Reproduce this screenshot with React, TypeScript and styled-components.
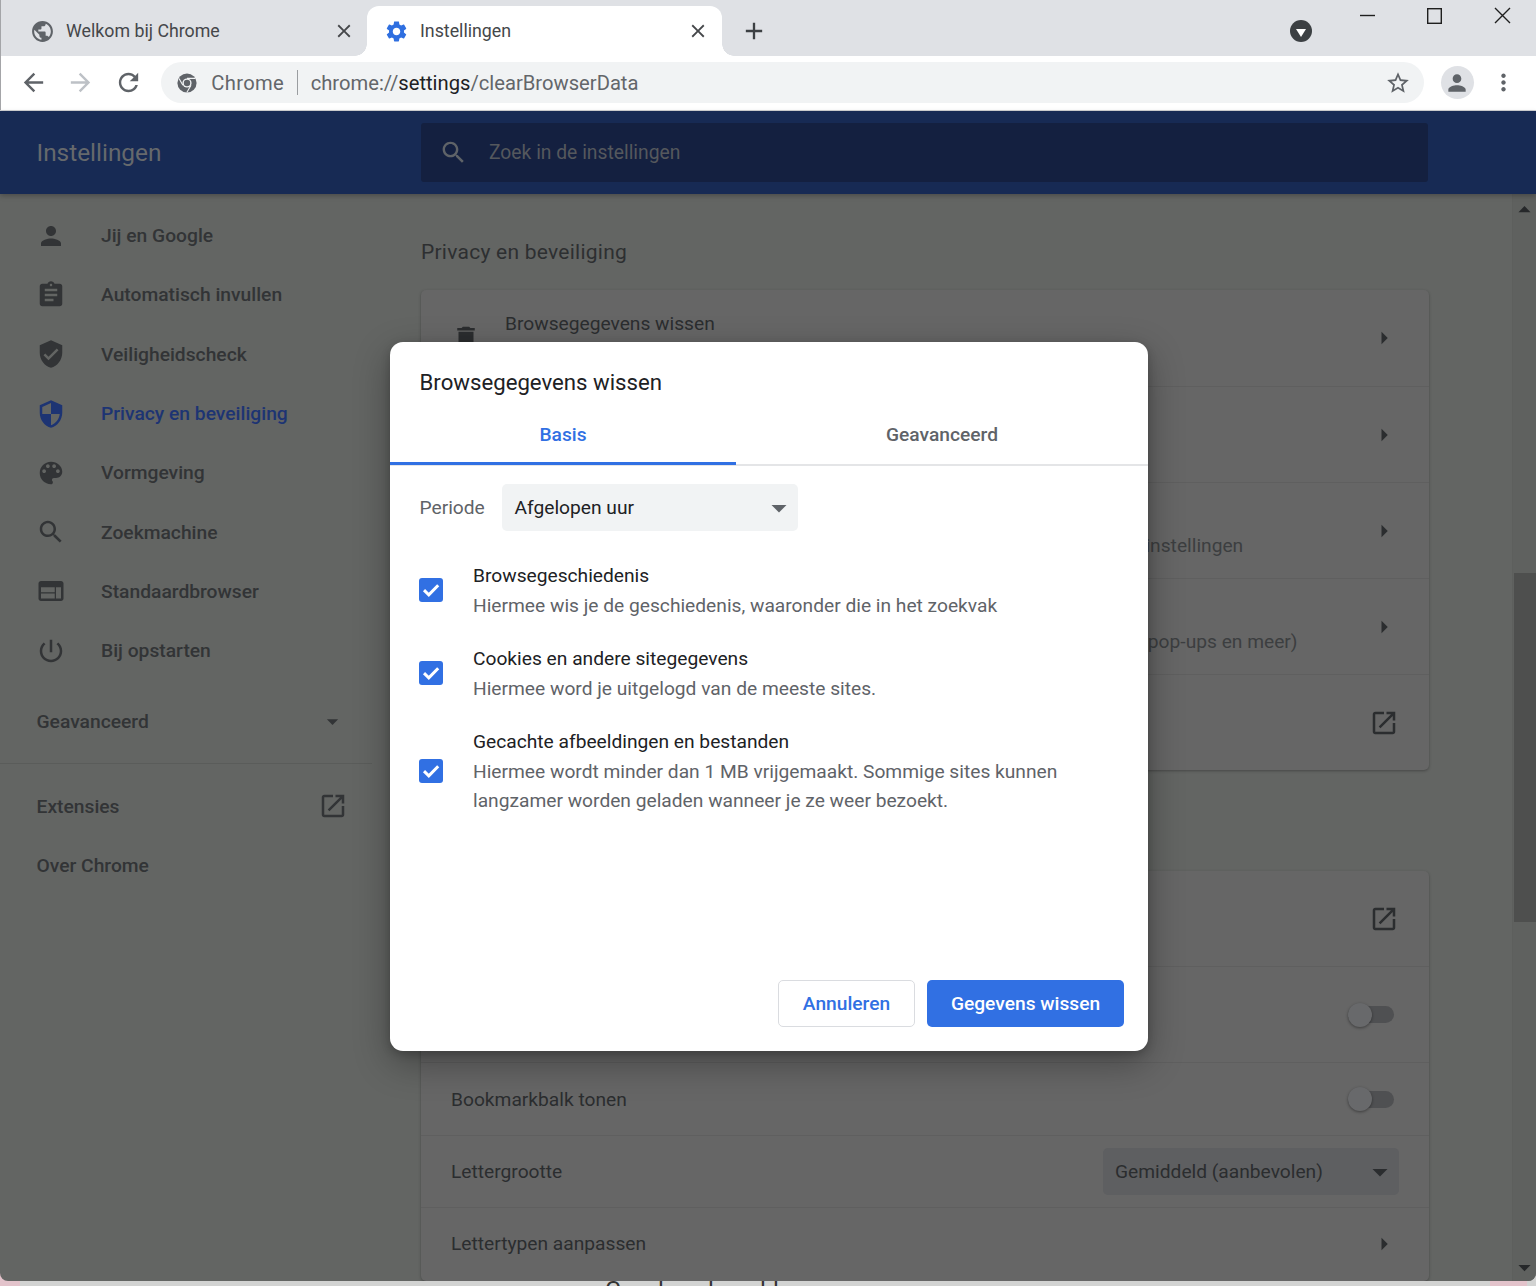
import React from "react";
import styled, { createGlobalStyle } from "styled-components";

const Global = createGlobalStyle`
  html, body { margin: 0; padding: 0; background: #d2d3d2; }
  * { box-sizing: border-box; }
`;

const P = {
  person: "M12 12c2.21 0 4-1.79 4-4s-1.79-4-4-4-4 1.79-4 4 1.79 4 4 4zm0 2c-2.67 0-8 1.34-8 4v2h16v-2c0-2.66-5.33-4-8-4z",
  assignment: "M19 3h-4.18C14.4 1.84 13.3 1 12 1c-1.3 0-2.4.84-2.82 2H5c-1.1 0-2 .9-2 2v14c0 1.1.9 2 2 2h14c1.1 0 2-.9 2-2V5c0-1.1-.9-2-2-2zm-7 0c.55 0 1 .45 1 1s-.45 1-1 1-1-.45-1-1 .45-1 1-1zm2 14H7v-2h7v2zm3-4H7v-2h10v2zm0-4H7V7h10v2z",
  verified: "M12 1L3 5v6c0 5.55 3.84 10.74 9 12 5.16-1.26 9-6.45 9-12V5l-9-4zm-2 16l-4-4 1.41-1.41L10 14.17l6.59-6.59L18 9l-8 8z",
  security: "M12 1L3 5v6c0 5.55 3.84 10.74 9 12 5.16-1.26 9-6.45 9-12V5l-9-4zm0 10.99h7c-.53 4.12-3.28 7.79-7 8.94V12H5V6.3l7-3.11v8.8z",
  palette: "M12 3c-4.97 0-9 4.03-9 9s4.03 9 9 9c.83 0 1.5-.67 1.5-1.5 0-.39-.15-.74-.39-1.01-.23-.26-.38-.61-.38-.99 0-.83.67-1.5 1.5-1.5H16c2.76 0 5-2.24 5-5 0-4.42-4.03-8-9-8zm-5.5 9c-.83 0-1.5-.67-1.5-1.5S5.67 9 6.5 9 8 9.67 8 10.5 7.33 12 6.5 12zm3-4C8.67 8 8 7.33 8 6.5S8.67 5 9.5 5s1.5.67 1.5 1.5S10.33 8 9.5 8zm5 0c-.83 0-1.5-.67-1.5-1.5S13.67 5 14.5 5s1.5.67 1.5 1.5S15.33 8 14.5 8zm3 4c-.83 0-1.5-.67-1.5-1.5S16.67 9 17.5 9s1.5.67 1.5 1.5-.67 1.5-1.5 1.5z",
  search: "M15.5 14h-.79l-.28-.27C15.41 12.59 16 11.11 16 9.5 16 5.91 13.09 3 9.5 3S3 5.91 3 9.5 5.91 16 9.5 16c1.61 0 3.09-.59 4.23-1.57l.27.28v.79l5 4.99L20.49 19l-4.99-5zm-6 0C7.01 14 5 11.99 5 9.5S7.01 5 9.5 5 14 7.01 14 9.5 11.99 14 9.5 14z",
  web: "M20 4H4c-1.1 0-1.99.9-1.99 2L2 18c0 1.1.9 2 2 2h16c1.1 0 2-.9 2-2V6c0-1.1-.9-2-2-2zm-5 14H4v-4h11v4zm0-5H4V9h11v4zm5 5h-4V9h4v9z",
  power: "M13 3h-2v10h2V3zm4.83 2.17l-1.42 1.42C17.99 7.86 19 9.81 19 12c0 3.87-3.13 7-7 7s-7-3.13-7-7c0-2.19 1.01-4.14 2.58-5.42L6.17 5.17C4.23 6.82 3 9.26 3 12c0 4.97 4.03 9 9 9s9-4.03 9-9c0-2.74-1.23-5.18-3.17-6.83z",
  open: "M19 19H5V5h7V3H5c-1.11 0-2 .9-2 2v14c0 1.1.89 2 2 2h14c1.1 0 2-.9 2-2v-7h-2v7zM14 3v2h3.59l-9.83 9.83 1.41 1.41L19 6.41V10h2V3h-7z",
  down: "M7 10l5 5 5-5z",
  right: "M10 17l5-5-5-5v10z",
  trash: "M6 19c0 1.1.9 2 2 2h8c1.1 0 2-.9 2-2V7H6v12zM19 4h-3.5l-1-1h-5l-1 1H5v2h14V4z",
  gear: "M19.14 12.94c.04-.3.06-.61.06-.94 0-.32-.02-.64-.07-.94l2.03-1.58c.18-.14.23-.41.12-.61l-1.92-3.32c-.12-.22-.37-.29-.59-.22l-2.39.96c-.5-.38-1.03-.7-1.62-.94l-.36-2.54c-.04-.24-.24-.41-.48-.41h-3.84c-.24 0-.43.17-.47.41l-.36 2.54c-.59.24-1.13.57-1.62.94l-2.39-.96c-.22-.08-.47 0-.59.22L2.74 8.87c-.12.21-.08.47.12.61l2.03 1.58c-.05.3-.09.63-.09.94s.02.64.07.94l-2.03 1.58c-.18.14-.23.41-.12.61l1.92 3.32c.12.22.37.29.59.22l2.39-.96c.5.38 1.03.7 1.62.94l.36 2.54c.05.24.24.41.48.41h3.84c.24 0 .44-.17.47-.41l.36-2.54c.59-.24 1.13-.56 1.62-.94l2.39.96c.22.08.47 0 .59-.22l1.92-3.32c.12-.22.07-.47-.12-.61l-2.01-1.58zM12 15.6c-1.98 0-3.6-1.62-3.6-3.6s1.62-3.6 3.6-3.6 3.6 1.62 3.6 3.6-1.62 3.6-3.6 3.6z",
  globe: "M12 2C6.48 2 2 6.48 2 12s4.48 10 10 10 10-4.48 10-10S17.52 2 12 2zm-1 17.93c-3.95-.49-7-3.85-7-7.93 0-.62.08-1.21.21-1.79L9 15v1c0 1.1.9 2 2 2v1.93zm6.9-2.54c-.26-.81-1-1.39-1.9-1.39h-1v-3c0-.55-.45-1-1-1H8v-2h2c.55 0 1-.45 1-1V7h2c1.1 0 2-.9 2-2v-.41c2.93 1.19 5 4.06 5 7.41 0 2.08-.8 3.97-2.1 5.39z",
  back: "M20 11H7.83l5.59-5.59L12 4l-8 8 8 8 1.41-1.41L7.83 13H20v-2z",
  forward: "M12 4l-1.41 1.41L16.17 11H4v2h12.17l-5.58 5.59L12 20l8-8z",
  reload: "M17.65 6.35C16.2 4.9 14.21 4 12 4c-4.42 0-7.99 3.58-7.99 8s3.57 8 7.99 8c3.73 0 6.84-2.55 7.73-6h-2.08c-.82 2.33-3.04 4-5.65 4-3.31 0-6-2.69-6-6s2.69-6 6-6c1.66 0 3.14.69 4.22 1.78L13 11h7V4l-2.35 2.35z",
  star: "M22 9.24l-7.19-.62L12 2 9.19 8.63 2 9.24l5.46 4.73L5.82 21 12 17.27 18.18 21l-1.63-7.03L22 9.24zM12 15.4l-3.76 2.27 1-4.28-3.32-2.88 4.38-.38L12 6.1l1.71 4.04 4.38.38-3.32 2.88 1 4.28L12 15.4z",
  close: "M19 6.41L17.59 5 12 10.59 6.41 5 5 6.41 10.59 12 5 17.59 6.41 19 12 13.41 17.59 19 19 17.59 13.41 12z",
  plus: "M19 13h-6v6h-2v-6H5v-2h6V5h2v6h6v2z",
  dots: "M12 8c1.1 0 2-.9 2-2s-.9-2-2-2-2 .9-2 2 .9 2 2 2zm0 2c-1.1 0-2 .9-2 2s.9 2 2 2 2-.9 2-2-.9-2-2-2zm0 6c-1.1 0-2 .9-2 2s.9 2 2 2 2-.9 2-2-.9-2-2-2z",
};

const Glyph = ({ d, size = 30, color = "currentColor" }: { d: string; size?: number; color?: string }) => (
  <svg width={size} height={size} viewBox="0 0 24 24" fill={color} style={{ flex: "none", display: "block" }}>
    <path d={d} />
  </svg>
);

const Frame = styled.div`
  position: relative;
  width: 1536px;
  height: 1286px;
  overflow: hidden;
  display: flex;
  flex-direction: column;
  font-family: Roboto, "Liberation Sans", sans-serif;
  background: linear-gradient(to right, #e3c3cb 20px, #d2d3d2 20px);
`;

/* ---- tab strip ---- */
const TabStrip = styled.div`
  height: 56px;
  flex: none;
  background: #dfe1e5;
  display: flex;
  align-items: flex-end;
  position: relative;
  box-shadow: inset 1px 0 #a4a5a8;
`;
const Tab = styled.div<{ $active?: boolean; $w: number }>`
  position: relative;
  width: ${(p) => p.$w}px;
  height: 50px;
  display: flex;
  align-items: center;
  padding: 0 ${(p) => (p.$active ? 13 : 12)}px 0 ${(p) => (p.$active ? 17 : 30)}px;
  border-radius: 12px 12px 0 0;
  background: ${(p) => (p.$active ? "#fff" : "transparent")};
  ${(p) =>
    p.$active &&
    `
    &::before, &::after {
      content: "";
      position: absolute;
      bottom: 0;
      width: 12px;
      height: 12px;
    }
    &::before { left: -12px; background: radial-gradient(circle at 0 0, transparent 11.5px, #fff 12px); }
    &::after { right: -12px; background: radial-gradient(circle at 100% 0, transparent 11.5px, #fff 12px); }
  `}
`;
const TabTitle = styled.span`
  flex: 1;
  margin: 0 0 2px 11px;
  font-size: 17.8px;
  color: #45474a;
  white-space: nowrap;
`;
const PlusButton = styled.div`
  width: 36px;
  height: 50px;
  margin-left: 14px;
  display: flex;
  align-items: center;
  justify-content: center;
`;
const StripSpacer = styled.div`
  flex: 1;
`;
const DropCircle = styled.div`
  width: 22px;
  height: 22px;
  margin: 0 224px 14px 0;
  border-radius: 50%;
  background: #3c4043;
  display: flex;
  align-items: center;
  justify-content: center;
  align-self: flex-end;
  &::after {
    content: "";
    margin-top: 3px;
    border-left: 5.5px solid transparent;
    border-right: 5.5px solid transparent;
    border-top: 8px solid #fff;
  }
`;
const WindowControls = styled.svg`
  position: absolute;
  top: 0;
  right: 0;
  width: 190px;
  height: 32px;
`;

/* ---- toolbar ---- */
const Toolbar = styled.div`
  height: 55px;
  flex: none;
  background: #fff;
  border-bottom: 1px solid #d3d4d6;
  display: flex;
  align-items: flex-start;
  padding: 6px 0 0 9.5px;
  box-shadow: inset 1px 0 #a4a5a8;
`;
const NavButton = styled.div<{ $w?: number }>`
  width: ${(p) => p.$w ?? 47.5}px;
  height: 41px;
  flex: none;
  display: flex;
  align-items: center;
  justify-content: center;
`;
const Omnibox = styled.div`
  width: 1263px;
  height: 41px;
  margin-left: 9.25px;
  border-radius: 21px;
  background: #f1f3f4;
  display: flex;
  align-items: center;
  padding: 0 13px 0 16px;
  font-size: 20.2px;
  color: #63666a;
  white-space: nowrap;
`;
const ChipLabel = styled.span`
  margin-left: 14px;
  letter-spacing: 0.35px;
`;
const OmniDivider = styled.span`
  width: 1px;
  height: 25px;
  margin: 0 13px 0 12.5px;
  background: #9a9da0;
`;
const UrlStrong = styled.span`
  color: #202124;
`;
const Grow = styled.div`
  flex: 1;
`;
const Avatar = styled.div`
  width: 33px;
  height: 33px;
  border-radius: 50%;
  background: #dfe1e5;
  display: flex;
  align-items: center;
  justify-content: center;
`;

/* ---- settings header ---- */
const Header = styled.header`
  height: 83px;
  flex: none;
  background: #172a54;
  display: flex;
  align-items: center;
  padding-left: 36.5px;
  box-shadow: 0 2px 5px rgba(0, 0, 0, 0.25);
  position: relative;
  z-index: 1;
`;
const HeaderTitle = styled.h1`
  width: 384.5px;
  margin: 0;
  font-size: 24.4px;
  font-weight: 400;
  color: #66696c;
`;
const SearchField = styled.div`
  width: 1007px;
  height: 59px;
  border-radius: 3px;
  background: #142040;
  display: flex;
  align-items: center;
  padding-left: 18px;
  color: #5f6368;
  font-size: 19.3px;
`;
const SearchText = styled.span`
  margin-left: 21px;
  color: #55585d;
`;

/* ---- body ---- */
const Body = styled.div`
  height: 1087px;
  flex: none;
  background: #636563;
  display: flex;
  border-radius: 0 0 8px 8px;
  overflow: hidden;
`;
const Sidebar = styled.nav`
  width: 372px;
  flex: none;
  padding-top: 12px;
  font-size: 19.25px;
  font-weight: 500;
  color: #323436;
`;
const NavItem = styled.div<{ $active?: boolean }>`
  height: 59.3px;
  display: flex;
  align-items: center;
  padding-left: 36px;
  gap: 35px;
  color: ${(p) => (p.$active ? "#1d3473" : "#323436")};
`;
const PlainItem = styled.div<{ $gap?: number }>`
  height: 59.3px;
  margin-top: ${(p) => p.$gap ?? 0}px;
  display: flex;
  align-items: center;
  justify-content: space-between;
  padding: 0 24.5px 0 36.5px;
`;
const ChevronSlot = styled.div`
  width: 30px;
  display: flex;
  justify-content: center;
`;
const NavDivider = styled.div`
  height: 1px;
  margin: 12px 0 13px;
  background: #5a5c5a;
`;
const Main = styled.main`
  flex: 1;
  padding: 0 0 0 49px;
  min-width: 0;
`;
const SectionTitle = styled.h2`
  margin: 0;
  height: 96px;
  padding-top: 44px;
  font-size: 21px;
  line-height: 28px;
  font-weight: 400;
  letter-spacing: 0.25px;
  color: #2d2f31;
`;
const Card = styled.section<{ $gap?: number; $pad?: number }>`
  width: 1008px;
  margin-top: ${(p) => p.$gap ?? 0}px;
  padding-bottom: ${(p) => p.$pad ?? 0}px;
  background: #666666;
  border-radius: 5px;
  box-shadow: 0 1px 3px rgba(0, 0, 0, 0.3);
`;
const Row = styled.div<{ $h: number }>`
  height: ${(p) => p.$h}px;
  display: flex;
  align-items: center;
  padding: 0 30px;
  color: #2b2d2f;
  font-size: 19.2px;
  white-space: nowrap;
  & + & {
    border-top: 1px solid #5f5f5f;
  }
`;
const RowIcon = styled.div`
  width: 30px;
  margin-right: 24px;
  color: #2b2d2f;
`;
const RowText = styled.div`
  flex: 1;
  min-width: 0;
  line-height: 29px;
`;
const RowSub = styled.div`
  color: #3c3e40;
`;
const Toggle = styled.div`
  position: relative;
  width: 46px;
  height: 17px;
  margin-right: 5px;
  border-radius: 9px;
  background: #4f5052;
  &::before {
    content: "";
    position: absolute;
    left: 0;
    top: -3.5px;
    width: 24px;
    height: 24px;
    border-radius: 50%;
    background: #68696b;
    box-shadow: 0 1px 3px rgba(0, 0, 0, 0.4);
  }
`;
const MiniSelect = styled.div`
  width: 296px;
  height: 47px;
  border-radius: 5px;
  background: #5e5f61;
  display: flex;
  align-items: center;
  justify-content: space-between;
  padding: 0 1px 0 12px;
  color: #2b2d2f;
`;
const ScrollTrack = styled.div`
  width: 24px;
  flex: none;
  background: #5f615f;
  border-left: 1px solid #5d5f5d;
  display: flex;
  flex-direction: column;
  align-items: center;
  color: #26282a;
`;
const ScrollCap = styled.div`
  height: 28px;
  width: 100%;
  display: flex;
  align-items: center;
  justify-content: center;
`;
const ScrollThumb = styled.div`
  width: 22px;
  height: 349px;
  margin-top: 351px;
  background: #4e4f4e;
`;

/* ---- bottom sliver ---- */
const Sliver = styled.div`
  height: 5px;
  flex: none;
  display: flex;
  overflow: hidden;
  background: #d2d3d2;
  font-size: 24px;
  line-height: 24px;
  color: #333;
`;
const SliverPink = styled.div<{ $w: number }>`
  width: ${(p) => p.$w}px;
  flex: none;
  background: #e3c3cb;
`;
const SliverText = styled.span<{ $w: number }>`
  width: ${(p) => p.$w}px;
  flex: none;
  margin-top: -3px;
`;

/* ---- dialog ---- */
const Dialog = styled.div`
  position: absolute;
  left: 390px;
  top: 342px;
  width: 758px;
  height: 709px;
  z-index: 5;
  background: #fff;
  border-radius: 13px;
  box-shadow: 0 12px 36px rgba(0, 0, 0, 0.32), 0 3px 10px rgba(0, 0, 0, 0.2);
  display: flex;
  flex-direction: column;
  color: #202124;
  font-size: 19.2px;
`;
const DialogTitle = styled.h3`
  margin: 0;
  height: 73px;
  padding: 26px 29.5px 0;
  font-size: 22.2px;
  line-height: 28px;
  font-weight: 400;
`;
const TabBar = styled.div`
  height: 51px;
  display: flex;
  border-bottom: 2px solid #e4e5e7;
  flex: none;
`;
const DialogTab = styled.div<{ $active?: boolean; $w: number }>`
  width: ${(p) => p.$w}px;
  height: 50px;
  display: flex;
  align-items: flex-start;
  justify-content: center;
  padding-top: 8px;
  font-weight: 500;
  color: ${(p) => (p.$active ? "#3170e3" : "#5f6368")};
  border-bottom: ${(p) => (p.$active ? "3px solid #3170e3" : "none")};
`;
const PeriodRow = styled.div`
  display: flex;
  align-items: center;
  padding: 18px 0 0 29.5px;
  flex: none;
`;
const PeriodLabel = styled.span`
  width: 82.5px;
  color: #5f6368;
`;
const PeriodSelect = styled.div`
  width: 296px;
  height: 47px;
  border-radius: 5px;
  background: #f1f3f4;
  display: flex;
  align-items: center;
  justify-content: space-between;
  padding: 0 1px 0 12.5px;
`;
const Options = styled.div`
  padding: 30px 60px 0 29px;
  flex: 1;
`;
const Option = styled.div<{ $h: number }>`
  height: ${(p) => p.$h}px;
  display: flex;
  align-items: flex-start;
  gap: 30px;
  line-height: 29.6px;
`;
const Check = styled.div<{ $top: number }>`
  width: 24px;
  height: 24px;
  flex: none;
  margin-top: ${(p) => p.$top}px;
  border-radius: 3px;
  background: #3170e3;
  display: flex;
  align-items: center;
  justify-content: center;
`;
const OptionText = styled.div`
  flex: 1;
`;
const OptionSub = styled.div`
  color: #5f6368;
`;
const Footer = styled.div`
  flex: none;
  display: flex;
  justify-content: flex-end;
  gap: 12px;
  padding: 0 24px 24px 0;
`;
const Button = styled.button<{ $primary?: boolean }>`
  height: 47px;
  border-radius: 5px;
  font: 500 19.2px Roboto, "Liberation Sans", sans-serif;
  cursor: pointer;
  padding: 0;
  width: ${(p) => (p.$primary ? "197px" : "137px")};
  background: ${(p) => (p.$primary ? "#3170e3" : "#fff")};
  color: ${(p) => (p.$primary ? "#fff" : "#3170e3")};
  border: ${(p) => (p.$primary ? "none" : "1.5px solid #dadce0")};
`;

const ChromeMark = () => (
  <svg width="20" height="20" viewBox="0 0 20 20" style={{ flex: "none" }}>
    <circle cx="10" cy="10" r="9.6" fill="#5f6368" />
    <circle cx="10" cy="10" r="4.6" fill="#f1f3f4" />
    <circle cx="10" cy="10" r="3.2" fill="#5f6368" />
    <path d="M10 5.4h8.4M5.9 12.2 2 5.5M14 12.3l-4.2 7.2" stroke="#f1f3f4" strokeWidth="1.1" />
  </svg>
);

const CheckMark = () => (
  <svg width="24" height="24" viewBox="0 0 24 24" fill="none" stroke="#fff" strokeWidth="3">
    <path d="M5 12.2l4.8 4.6L19.2 7.2" />
  </svg>
);

const nav: [string, string, boolean?][] = [
  [P.person, "Jij en Google"],
  [P.assignment, "Automatisch invullen"],
  [P.verified, "Veiligheidscheck"],
  [P.security, "Privacy en beveiliging", true],
  [P.palette, "Vormgeving"],
  [P.search, "Zoekmachine"],
  [P.web, "Standaardbrowser"],
  [P.power, "Bij opstarten"],
];

export default function App() {
  return (
    <Frame>
      <Global />
      <TabStrip>
        <Tab $w={367}>
          <Glyph d={P.globe} size={25} color="#5f6368" />
          <TabTitle>Welkom bij Chrome</TabTitle>
          <Glyph d={P.close} size={22} color="#45474a" />
        </Tab>
        <Tab $active $w={355}>
          <Glyph d={P.gear} size={25} color="#2f6fe0" />
          <TabTitle>Instellingen</TabTitle>
          <Glyph d={P.close} size={22} color="#45474a" />
        </Tab>
        <PlusButton>
          <Glyph d={P.plus} size={28} color="#3c4043" />
        </PlusButton>
        <StripSpacer />
        <DropCircle />
        <WindowControls viewBox="0 0 190 32" fill="none" stroke="#1f1f1f" strokeWidth="1.4">
          <path d="M14 15.5h15" />
          <rect x="81.7" y="8.7" width="13.6" height="14.6" />
          <path d="M149 8l15 15M164 8l-15 15" />
        </WindowControls>
      </TabStrip>

      <Toolbar>
        <NavButton><Glyph d={P.back} size={29} color="#5f6368" /></NavButton>
        <NavButton><Glyph d={P.forward} size={29} color="#bdc1c6" /></NavButton>
        <NavButton><Glyph d={P.reload} size={29} color="#5f6368" /></NavButton>
        <Omnibox>
          <ChromeMark />
          <ChipLabel>Chrome</ChipLabel>
          <OmniDivider />
          <span>chrome://<UrlStrong>settings</UrlStrong>/clearBrowserData</span>
          <Grow />
          <Glyph d={P.star} size={26} color="#5f6368" />
        </Omnibox>
        <NavButton $w={66}>
          <Avatar><Glyph d={P.person} size={26} color="#5f6368" /></Avatar>
        </NavButton>
        <NavButton $w={26}><Glyph d={P.dots} size={27} color="#5f6368" /></NavButton>
      </Toolbar>

      <Header>
        <HeaderTitle>Instellingen</HeaderTitle>
        <SearchField>
          <Glyph d={P.search} size={29} />
          <SearchText>Zoek in de instellingen</SearchText>
        </SearchField>
      </Header>

      <Body>
        <Sidebar>
          {nav.map(([d, label, active]) => (
            <NavItem key={label} $active={active}>
              <Glyph d={d} />
              {label}
            </NavItem>
          ))}
          <PlainItem $gap={11}>
            Geavanceerd
            <ChevronSlot><Glyph d={P.down} size={27} /></ChevronSlot>
          </PlainItem>
          <NavDivider />
          <PlainItem>
            Extensies
            <Glyph d={P.open} />
          </PlainItem>
          <PlainItem>Over Chrome</PlainItem>
        </Sidebar>

        <Main>
          <SectionTitle>Privacy en beveiliging</SectionTitle>
          <Card>
            <Row $h={96}>
              <RowIcon><Glyph d={P.trash} /></RowIcon>
              <RowText>
                Browsegegevens wissen
                <RowSub>Geschiedenis, cookies, cache en meer wissen</RowSub>
              </RowText>
              <Glyph d={P.right} />
            </Row>
            <Row $h={96}>
              <RowIcon><Glyph d={P.right} /></RowIcon>
              <RowText>
                Cookies en andere sitegegevens
                <RowSub>Cookies van derden worden geblokkeerd</RowSub>
              </RowText>
              <Glyph d={P.right} />
            </Row>
            <Row $h={96}>
              <RowIcon><Glyph d={P.verified} /></RowIcon>
              <RowText>
                Beveiliging
                <RowSub>Safe Browsing (bescherming tegen gevaarlijke sites) en andere beveiligings&shy;instellingen</RowSub>
              </RowText>
              <Glyph d={P.right} />
            </Row>
            <Row $h={96}>
              <RowIcon><Glyph d={P.web} /></RowIcon>
              <RowText>
                Site-instellingen
                <RowSub>Beheren welke informatie sites mogen gebruiken en tonen (locatie, camera, pop-ups en meer)</RowSub>
              </RowText>
              <Glyph d={P.right} />
            </Row>
            <Row $h={96}>
              <RowIcon><Glyph d={P.person} /></RowIcon>
              <RowText>Privacy Sandbox</RowText>
              <Glyph d={P.open} />
            </Row>
          </Card>

          <Card $gap={101} $pad={2}>
            <Row $h={95}>
              <RowText>Thema</RowText>
              <Glyph d={P.open} />
            </Row>
            <Row $h={96}>
              <RowText>Startknop tonen</RowText>
              <Toggle />
            </Row>
            <Row $h={73}>
              <RowText>Bookmarkbalk tonen</RowText>
              <Toggle />
            </Row>
            <Row $h={72}>
              <RowText>Lettergrootte</RowText>
              <MiniSelect>
                Gemiddeld (aanbevolen)
                <Glyph d={P.down} size={36} />
              </MiniSelect>
            </Row>
            <Row $h={72}>
              <RowText>Lettertypen aanpassen</RowText>
              <Glyph d={P.right} />
            </Row>
          </Card>
        </Main>

        <ScrollTrack>
          <ScrollCap><Glyph d="M7 15l5-5 5 5z" size={29} /></ScrollCap>
          <ScrollThumb />
          <Grow />
          <ScrollCap><Glyph d={P.down} size={29} /></ScrollCap>
        </ScrollTrack>
      </Body>

      <Sliver>
        <SliverPink $w={20} />
        <SliverText $w={585} />
        <SliverText $w={53}>G</SliverText>
        <SliverText $w={50}>l</SliverText>
        <SliverText $w={52}>l</SliverText>
        <SliverText $w={13}>l</SliverText>
        <SliverText $w={717}>l</SliverText>
        <SliverPink $w={37} />
      </Sliver>

      <Dialog>
        <DialogTitle>Browsegegevens wissen</DialogTitle>
        <TabBar>
          <DialogTab $active $w={346}>Basis</DialogTab>
          <DialogTab $w={412}>Geavanceerd</DialogTab>
        </TabBar>
        <PeriodRow>
          <PeriodLabel>Periode</PeriodLabel>
          <PeriodSelect>
            Afgelopen uur
            <Glyph d={P.down} size={36} color="#5f6368" />
          </PeriodSelect>
        </PeriodRow>
        <Options>
          <Option $h={83}>
            <Check $top={17}><CheckMark /></Check>
            <OptionText>
              Browsegeschiedenis
              <OptionSub>Hiermee wis je de geschiedenis, waaronder die in het zoekvak</OptionSub>
            </OptionText>
          </Option>
          <Option $h={83}>
            <Check $top={17}><CheckMark /></Check>
            <OptionText>
              Cookies en andere sitegegevens
              <OptionSub>Hiermee word je uitgelogd van de meeste sites.</OptionSub>
            </OptionText>
          </Option>
          <Option $h={113}>
            <Check $top={32}><CheckMark /></Check>
            <OptionText>
              Gecachte afbeeldingen en bestanden
              <OptionSub>
                Hiermee wordt minder dan 1 MB vrijgemaakt. Sommige sites kunnen langzamer worden geladen wanneer je ze weer bezoekt.
              </OptionSub>
            </OptionText>
          </Option>
        </Options>
        <Footer>
          <Button>Annuleren</Button>
          <Button $primary>Gegevens wissen</Button>
        </Footer>
      </Dialog>
    </Frame>
  );
}
